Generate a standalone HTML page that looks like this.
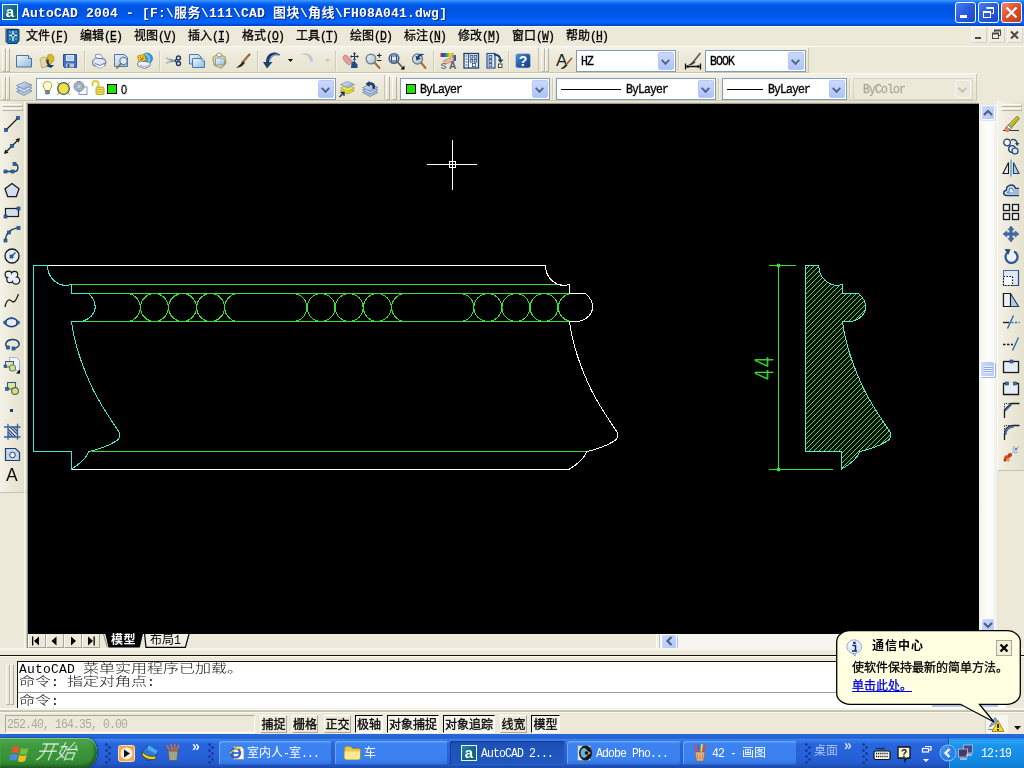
<!DOCTYPE html>
<html lang="zh-CN">
<head>
<meta charset="utf-8">
<title>AutoCAD 2004 - [F:\服务\111\CAD 图块\角线\FH08A041.dwg]</title>
<style>
*{box-sizing:border-box;margin:0;padding:0}
html,body{width:1024px;height:768px;overflow:hidden;background:#ece9d8}
body{position:relative;font-family:"Liberation Mono","Noto Sans CJK SC",monospace;font-size:12px;line-height:12px;color:#000}
.a{position:absolute}
.t{position:absolute;white-space:nowrap;font-size:12px;line-height:14px;height:14px}
.l{font-family:"Liberation Mono",monospace !important;font-size:11.5px !important;letter-spacing:-0.9px !important;display:inline-block;white-space:pre;transform:scaleY(1.16);transform-origin:0 76%}
svg{position:absolute;overflow:visible}
/* title bar */
#title{left:0;top:0;width:1024px;height:26px;background:linear-gradient(to bottom,#3f99ff 0px,#2c8afc 1px,#1672f6 2.5px,#0860ee 4px,#0055e6 6px,#0054e3 9px,#0056e8 14px,#005cf2 18px,#0366fb 21px,#0462f4 23px,#0150dc 24.5px,#003cba 26px)}
#ttext{left:22px;top:5px;height:18px;line-height:18px;color:#fff;font-weight:bold;font-family:"Liberation Mono","Noto Sans CJK SC",monospace;font-size:13px;letter-spacing:0.2px;text-shadow:1px 1px 0 #0a2a80}
#ttext b{font-size:13px;letter-spacing:0.5px;font-weight:bold}
.t,.tkt,.ddt,.sbtn,.cmd{will-change:transform}
.mi,.sbtn,.ddt,.bt{-webkit-text-stroke:0.3px currentColor}
.wb{position:absolute;top:2px;width:21px;height:21px;border:1px solid #fff;border-radius:3px;background:linear-gradient(135deg,#4a7ef0 0%,#2a5ce0 45%,#1c48c8 100%)}
.wb.x{background:linear-gradient(135deg,#f08a6a 0%,#e0522c 45%,#c23a14 100%)}
/* menu */
#menu{left:0;top:26px;width:1024px;height:21px;background:#ece9d8;border-top:1px solid #f8f7f2}
.mi{top:30px}
.cb{position:absolute;top:27px;width:16px;height:16px;border:1px solid #f7f6ef;border-right-color:#d8d4c2;border-bottom-color:#d8d4c2;background:#efede2}
</style>
</head>
<body>
<!-- ================= TITLE BAR ================= -->
<div id="title" class="a"></div>
<div class="a" style="left:2px;top:4px;width:16px;height:16px;border:1px solid #dffcff;background:linear-gradient(135deg,#2a8aa8,#14607e 60%,#1a6a58)"></div>
<div class="t" style="left:4px;top:4px;width:12px;height:16px;line-height:15px;text-align:center;color:#f4ffff;font:bold 15px/15px 'Liberation Sans',sans-serif">a</div>
<div id="ttext" class="t">AutoCAD 2004 - [F:\<b>服务</b>\111\CAD <b>图块</b>\<b>角线</b>\FH08A041.dwg]</div>
<div class="wb" style="left:955px"><div class="a" style="left:4px;top:12px;width:7px;height:3px;background:#fff"></div></div>
<div class="wb" style="left:978px"><svg style="left:0;top:0" width="19" height="19" viewBox="0 0 19 19"><path d="M7.5 4.5h7v6h-2" fill="none" stroke="#fff" stroke-width="1"/><path d="M7.5 5h7" stroke="#fff" stroke-width="2"/><rect x="4.5" y="8.5" width="7" height="6" fill="none" stroke="#fff"/><path d="M4.5 9h7" stroke="#fff" stroke-width="2"/></svg></div>
<div class="wb x" style="left:1001px"><svg style="left:0;top:0" width="19" height="19" viewBox="0 0 19 19"><path d="M4.500 4.500l10 10M14.500 4.500l-10 10" stroke="#fff" stroke-width="2.300" stroke-linecap="butt"/></svg></div>

<!-- ================= MENU BAR ================= -->
<div id="menu" class="a"></div>
<svg style="left:4px;top:28px" width="16" height="16" viewBox="0 0 16 16"><path d="M1 0.5h12l2 2v10l-2 3H3l-2-2z" fill="#8a8f98"/><path d="M3 1.5h12v11l-2 3H4l-1-1z" fill="#1a6aa8" stroke="#0e3c68" stroke-width="1"/><path d="M9 3v10M5 7.5h8" stroke="#e8fbff" stroke-width="1.3"/><circle cx="9" cy="7.5" r="1.6" fill="#0e3c68" stroke="#e8fbff" stroke-width="0.8"/><path d="M5 4h2M11 4h2M5 11h2M11 11h2" stroke="#6fc0e8" stroke-width="1.2"/></svg>
<div class="t mi" style="left:26px">文件<span class="l">(<u>F</u>)</span></div>
<div class="t mi" style="left:80px">编辑<span class="l">(<u>E</u>)</span></div>
<div class="t mi" style="left:134px">视图<span class="l">(<u>V</u>)</span></div>
<div class="t mi" style="left:188px">插入<span class="l">(<u>I</u>)</span></div>
<div class="t mi" style="left:242px">格式<span class="l">(<u>O</u>)</span></div>
<div class="t mi" style="left:296px">工具<span class="l">(<u>T</u>)</span></div>
<div class="t mi" style="left:350px">绘图<span class="l">(<u>D</u>)</span></div>
<div class="t mi" style="left:404px">标注<span class="l">(<u>N</u>)</span></div>
<div class="t mi" style="left:458px">修改<span class="l">(<u>M</u>)</span></div>
<div class="t mi" style="left:512px">窗口<span class="l">(<u>W</u>)</span></div>
<div class="t mi" style="left:566px">帮助<span class="l">(<u>H</u>)</span></div>
<div class="cb" style="left:971px"><div class="a" style="left:3px;top:9px;width:6px;height:2px;background:#4a4a48"></div></div>
<div class="cb" style="left:989px"><svg style="left:0;top:0" width="13" height="14" viewBox="0 0 13 14"><path d="M4.5 4V2.5h6v5H9" fill="none" stroke="#4a4a48"/><path d="M4 2.5h7" stroke="#4a4a48" stroke-width="2"/><rect x="2.5" y="5.5" width="6" height="5" fill="none" stroke="#4a4a48"/><path d="M2 5.5h7" stroke="#4a4a48" stroke-width="2"/></svg></div>
<div class="cb" style="left:1007px"><svg style="left:0;top:0" width="13" height="14" viewBox="0 0 13 14"><path d="M3 3.5l7 7M10 3.5l-7 7" stroke="#4a4a48" stroke-width="2"/></svg></div>
<style>
.tbbg{position:absolute;background:#ece9d8}
.grip{position:absolute;width:4px;border-left:1px solid #fbfaf4;border-top:1px solid #fbfaf4;border-right:1px solid #b5b2a2;border-bottom:1px solid #b5b2a2}
.hgrip{position:absolute;height:3px;border-left:1px solid #fbfaf4;border-top:1px solid #fbfaf4;border-right:1px solid #b5b2a2;border-bottom:1px solid #b5b2a2}
.sep{position:absolute;width:2px;top:51px;height:20px;border-left:1px solid #cfccbc;border-right:1px solid #f3f1e8}
.dd{position:absolute;height:22px;border:1px solid #7f9db9;background:#fff}
.dd .btn{position:absolute;right:1px;top:1px;width:16px;height:18px;border-radius:2px;border:1px solid #b7c8f5;background:linear-gradient(to bottom,#cbd8fb 0%,#bccefa 50%,#adc2f6 100%)}
.dd .btn:after{content:"";position:absolute;left:3px;top:4px;width:5px;height:5px;border-right:2px solid #4d6185;border-bottom:2px solid #4d6185;transform:rotate(45deg) scale(0.9)}
.dd.dis{border-color:#d8d5c4;background:#ece9d8}
.dd.dis .btn{background:#ebe9dd;border-color:#f6f5ee}
.dd.dis .btn:after{border-color:#c4c1b2}
.ddt{position:absolute;top:4px;line-height:14px;white-space:nowrap}
</style>
<!-- toolbar row backgrounds / edges -->
<div class="a" style="left:0;top:46px;width:1024px;height:1px;background:#fbfaf5"></div>
<div class="a" style="left:0;top:47px;width:539px;height:26px;background:linear-gradient(to bottom,#f3f1e7,#ece9d8 40%,#e6e3d0)"></div>
<div class="a" style="left:0;top:72px;width:809px;height:1px;background:#c9c6b4"></div>
<div class="a" style="left:538px;top:48px;width:1px;height:24px;background:#c9c6b4"></div>
<div class="a" style="left:539px;top:47px;width:270px;height:25px;background:linear-gradient(to bottom,#f3f1e7,#ece9d8 40%,#e6e3d0)"></div>
<div class="a" style="left:808px;top:48px;width:1px;height:25px;background:#c9c6b4"></div>
<div class="a" style="left:0;top:73px;width:977px;height:1px;background:#fbfaf5"></div>
<div class="a" style="left:0;top:74px;width:977px;height:27px;background:linear-gradient(to bottom,#f3f1e7,#ece9d8 40%,#e6e3d0)"></div>
<div class="a" style="left:976px;top:74px;width:1px;height:27px;background:#c9c6b4"></div>
<div class="a" style="left:384px;top:75px;width:1px;height:25px;background:#c9c6b4"></div>
<div class="a" style="left:0;top:100px;width:977px;height:1px;background:#c9c6b4"></div>
<!-- grips -->
<div class="grip" style="left:2px;top:48px;height:24px"></div><div class="grip" style="left:6px;top:48px;height:24px"></div>
<div class="grip" style="left:541px;top:48px;height:24px"></div><div class="grip" style="left:545px;top:48px;height:24px"></div>
<div class="grip" style="left:2px;top:76px;height:24px"></div><div class="grip" style="left:6px;top:76px;height:24px"></div>
<div class="grip" style="left:386px;top:76px;height:24px"></div><div class="grip" style="left:392px;top:76px;height:24px;width:5px"></div>
<!-- separators row1 -->
<div class="sep" style="left:84px"></div><div class="sep" style="left:159px"></div><div class="sep" style="left:257px"></div>
<div class="sep" style="left:335px"></div><div class="sep" style="left:433px"></div><div class="sep" style="left:508px"></div>
<div class="sep" style="left:678px"></div>
<div class="sep" style="left:552px;top:78px;height:21px"></div><div class="sep" style="left:718px;top:78px;height:21px"></div><div class="sep" style="left:849px;top:78px;height:21px"></div>
<!-- dropdowns row1 -->
<div class="dd" style="left:576px;top:50px;width:100px"><div class="ddt l" style="left:4px">HZ</div><div class="btn"></div></div>
<div class="dd" style="left:705px;top:50px;width:101px"><div class="ddt l" style="left:4px">BOOK</div><div class="btn"></div></div>
<!-- dropdowns row2 -->
<div class="dd" style="left:36px;top:78px;width:300px"><div class="ddt" style="left:84px;font:12px/14px 'Liberation Sans',sans-serif;transform:scaleX(0.900);transform-origin:0 50%">0</div><div class="btn"></div>
 <div class="a" style="left:70px;top:5px;width:10px;height:10px;background:#1fe600;border:1px solid #000"></div></div>
<div class="dd" style="left:400px;top:78px;width:150px"><div class="a" style="left:5px;top:5px;width:10px;height:10px;background:#1fe600;border:1px solid #000"></div><div class="ddt l" style="left:19px">ByLayer</div><div class="btn"></div></div>
<div class="dd" style="left:556px;top:78px;width:160px"><div class="a" style="left:4px;top:10px;width:60px;height:1px;background:#000"></div><div class="ddt l" style="left:69px">ByLayer</div><div class="btn"></div></div>
<div class="dd" style="left:722px;top:78px;width:125px"><div class="a" style="left:4px;top:10px;width:36px;height:1px;background:#000"></div><div class="ddt l" style="left:45px">ByLayer</div><div class="btn"></div></div>
<div class="dd dis" style="left:853px;top:78px;width:120px"><div class="ddt l" style="left:9px;color:#aca899">ByColor</div><div class="btn"></div></div>
<svg width="0" height="0" style="left:0;top:0"><defs>
<linearGradient id="gPage" x1="0" y1="0" x2="1" y2="1"><stop offset="0" stop-color="#eef6fc"/><stop offset="1" stop-color="#8fbbe0"/></linearGradient>
<linearGradient id="gLens" x1="0" y1="0" x2="1" y2="1"><stop offset="0" stop-color="#f2f6fa"/><stop offset="1" stop-color="#a8bcd0"/></linearGradient>
<linearGradient id="gHelp" x1="0" y1="0" x2="1" y2="1"><stop offset="0" stop-color="#5a94d8"/><stop offset="0.5" stop-color="#2a5ea8"/><stop offset="1" stop-color="#123a78"/></linearGradient>
<linearGradient id="gRain" x1="0" y1="0" x2="1" y2="0"><stop offset="0" stop-color="#e0203a"/><stop offset="0.25" stop-color="#2040e0"/><stop offset="0.5" stop-color="#20c040"/><stop offset="0.75" stop-color="#f0e020"/><stop offset="1" stop-color="#f08020"/></linearGradient>
<linearGradient id="gSheet" x1="0" y1="0" x2="1" y2="1"><stop offset="0" stop-color="#e6eef8"/><stop offset="1" stop-color="#7f9cc4"/></linearGradient>
</defs></svg>
<!-- row 1 icons -->
<svg style="left:16px;top:53px" width="16" height="16" viewBox="0 0 16 16"><path d="M0.5 2.5h12l3 3v8.500h-15z" fill="url(#gPage)" stroke="#45628e" stroke-width="0.900"/><path d="M12.500 2.500v3h3" fill="#f6fbff" stroke="#45628e" stroke-width="0.900"/></svg>
<svg style="left:39px;top:53px" width="16" height="16" viewBox="0 0 16 16"><path d="M1 6l3-2 4 1 1 8-6 2-1-4z" fill="#e6d7a6" stroke="#b9a36a" stroke-width="0.8"/><path d="M9 2c3-2 6 0 6 4 0 3-3 5-6 5-1 0-2-2-2-4z" fill="#d8b62a" stroke="#a88a20" stroke-width="0.6"/><path d="M8 6c-1 2-1 4 1 6l-2 1 5 2 3-3-3 0c-2-1-3-3-2-5z" fill="#1e3f66"/></svg>
<svg style="left:62px;top:53px" width="16" height="16" viewBox="0 0 16 16"><path d="M1.500 1.500h13v13h-12l-1-1z" fill="#4a70c2" stroke="#2d4e96"/><rect x="4" y="2" width="8" height="6" fill="#dbe9fb"/><path d="M5 4h6M5 6h6" stroke="#86a8dc" stroke-width="0.800"/><rect x="4" y="10.500" width="8" height="4" fill="#b4c2da"/><rect x="5.500" y="11.200" width="2" height="3" fill="#2d4e96"/></svg>
<svg style="left:91px;top:53px" width="16" height="16" viewBox="0 0 16 16"><path d="M4 2l5-1 3 4-6 2z" fill="#fbfcff" stroke="#6a7aa6" stroke-width="0.8"/><path d="M1.500 8l3-3 9 1 1.500 3-1 3.500-5 2.500-7-3z" fill="#dfe5f2" stroke="#4e5f94" stroke-width="0.9"/><path d="M4 10.500l5 2 5-2.500" fill="none" stroke="#4e5f94" stroke-width="0.8"/><path d="M5 12.500l4 1.800 4-2" stroke="#fff" stroke-width="1.300" fill="none"/></svg>
<svg style="left:113px;top:53px" width="17" height="16" viewBox="0 0 17 16"><path d="M1.500 1.500h10l3 3v9h-13z" fill="url(#gPage)" stroke="#4a78ae"/><circle cx="10.500" cy="8" r="3.600" fill="#e8f0f8" fill-opacity="0.85" stroke="#6a84a8" stroke-width="1.200"/><path d="M8 10.500l-4 4.500" stroke="#9a6a3a" stroke-width="1.800" stroke-linecap="round"/></svg>
<svg style="left:136px;top:52px" width="17" height="17" viewBox="0 0 17 17"><circle cx="11" cy="6.500" r="5.500" fill="#3f9ad8" stroke="#1f6aa8" stroke-width="0.6"/><path d="M9 2c3 1 5 4 4 8" fill="none" stroke="#bfe4f8" stroke-width="1.200"/><path d="M1.500 4l7-1.500 1.500 6-7 2z" fill="#f0c828" stroke="#b08a10" stroke-width="0.8"/><path d="M4 5.500h1M6.500 5h1M4.500 7.500l3-0.800" stroke="#7a5a08" stroke-width="1"/><path d="M1.500 11l3-2 8 1 2 2-1 2.500-5 2-6.500-2.500z" fill="#eef1f8" stroke="#5a6a9a" stroke-width="0.8"/><path d="M4 13l5 1.800 4-1.800" stroke="#8f9cc0" stroke-width="0.8" fill="none"/></svg>
<svg style="left:165px;top:53px" width="17" height="16" viewBox="0 0 17 16"><path d="M1 5l10 3.500M1.500 10l9.500-3" stroke="#8a8f9a" stroke-width="1.400" fill="none"/><path d="M1 5l5 1M1.500 10l5-1" stroke="#c9cdd6" stroke-width="1"/><circle cx="13.500" cy="5" r="2" fill="none" stroke="#1f3a66" stroke-width="1.400"/><circle cx="13.500" cy="10.500" r="2" fill="none" stroke="#1f3a66" stroke-width="1.400"/><path d="M10 7.500l2-1.500M10 8l2 1.500" stroke="#1f3a66" stroke-width="1.300"/></svg>
<svg style="left:189px;top:53px" width="16" height="16" viewBox="0 0 16 16"><path d="M0.500 1.500h9l2.500 2.500v7h-11.500z" fill="url(#gPage)" stroke="#4a78ae"/><path d="M3.500 5.500h9.500l2.500 2.500v6.500h-12z" fill="url(#gPage)" stroke="#4a78ae"/><path d="M13 5.500v2.500h2.500" fill="#f6fbff" stroke="#4a78ae" stroke-width="0.8"/></svg>
<svg style="left:211px;top:52px" width="17" height="17" viewBox="0 0 17 17"><path d="M2 5.500l5-3.500 7 3 1 6-5 5-7-3z" fill="#efe4b8" stroke="#b8a04a" stroke-width="1.300"/><path d="M5.500 2.500l2-1.500 3 1 .5 2-4 1z" fill="#f4f4f0" stroke="#7a7a70" stroke-width="0.700"/><path d="M4.500 6h7l2 2v5h-9z" fill="url(#gPage)" stroke="#6a8ab0" stroke-width="0.800"/></svg>
<svg style="left:235px;top:53px" width="16" height="16" viewBox="0 0 16 16"><path d="M14.500 1.500l-7.500 8.500" stroke="#8a6238" stroke-width="2.200" stroke-linecap="round"/><path d="M14 2.500l-6 7" stroke="#c89a60" stroke-width="0.700"/><path d="M8.500 8.500l1.500 1.500-3.500 3.500c-2 1-4 1-5.500 1 2-1 3-2 4-3z" fill="#2a2a2a"/></svg>
<svg style="left:263px;top:52px" width="18" height="18" viewBox="0 0 18 18"><path d="M17 3.500c-5-2.500-10.500 0-11 6.500h3.500l-5.500 6.500-4-6.500h3c0-8 7-12.500 14-7.500z" fill="#1f3f6e"/><path d="M16 3.300c-4-1.500-8.500 1-9.300 6" stroke="#4f74a6" stroke-width="0.900" fill="none"/></svg>
<svg style="left:288px;top:59px" width="5" height="3" viewBox="0 0 5 3"><path d="M0 0h5l-2.500 3z" fill="#000"/></svg>
<svg style="left:298px;top:52px" width="18" height="18" viewBox="0 0 18 18"><path d="M2 3c5-2 10 1 10.500 7l-3 0 4.500 6 4-6h-3c0-7-6-11.500-13-7z" fill="#c6c8cc"/><path d="M9.500 10l4.500 6 4-6" fill="#fbfbfb" fill-opacity="0.600"/></svg>
<svg style="left:325px;top:59px" width="5" height="3" viewBox="0 0 5 3"><path d="M0 0h5l-2.500 3z" fill="#c6c3b6"/></svg>
<svg style="left:342px;top:52px" width="17" height="18" viewBox="0 0 17 18"><path d="M1 4.500c1-1.500 2.500-1.500 4-1l5.500 5.500-3 4c-2.500-1-5-3-6.500-6.500z" fill="#e6a4a0" stroke="#b87878" stroke-width="0.700"/><path d="M2.500 5l5 5M4 4l5 5M1.500 7l4.500 4" stroke="#c88480" stroke-width="0.600"/><path d="M9.500 10.500l3-1.500 3 3.500v3.500h-6.500z" fill="#1f4e80"/><path d="M12.500 1v7M9 4.500h7" stroke="#1f3a5e" stroke-width="1.200"/><path d="M12.500 0l1.600 2h-3.200zM12.500 9l1.600-2h-3.200zM8 4.500l2-1.600v3.200zM17 4.500l-2-1.600v3.200z" fill="#1f3a5e"/></svg>
<svg style="left:365px;top:52px" width="17" height="18" viewBox="0 0 17 18"><circle cx="6" cy="7" r="4.800" fill="url(#gLens)" stroke="#70809a" stroke-width="1.400"/><path d="M9.500 10.500l5 5.500" stroke="#a0703a" stroke-width="2" stroke-linecap="round"/><path d="M12 3.500h4.500M14.250 1.200v4.600M12 8.500h4.500" stroke="#222" stroke-width="1.100"/></svg>
<svg style="left:388px;top:52px" width="17" height="18" viewBox="0 0 17 18"><circle cx="6" cy="6.500" r="4.800" fill="url(#gLens)" stroke="#3f5e8a" stroke-width="1.500"/><rect x="3.500" y="4" width="5" height="5" fill="#dfeaf6" stroke="#2a4a7a" stroke-width="1"/><path d="M9.500 10l4.500 5" stroke="#6a5a4a" stroke-width="1.800" stroke-linecap="round"/><path d="M16.500 13.500v4h-4z" fill="#000"/></svg>
<svg style="left:411px;top:52px" width="17" height="18" viewBox="0 0 17 18"><circle cx="6.500" cy="7" r="5" fill="url(#gLens)" stroke="#70809a" stroke-width="1.400"/><path d="M13.500 2.500c-3-1.500-6-.5-7 2l-2-.8 1 5 4.500-2.500-2-.8c1-1.500 3-2 5.500-2.900z" fill="#1f3f6e"/><path d="M10 10.500l4.500 5.500" stroke="#a0703a" stroke-width="2" stroke-linecap="round"/></svg>
<svg style="left:440px;top:52px" width="17" height="18" viewBox="0 0 17 18"><rect x="0.500" y="1" width="13" height="4" fill="url(#gRain)"/><path d="M3 9l9-4 3 1-1 2.500-8 3.500z" fill="#e8b8a0" stroke="#a87868" stroke-width="0.600"/><rect x="13.500" y="3" width="2.500" height="6" fill="#3a5a9a"/><text x="0.500" y="17" font-family="Liberation Sans,sans-serif" font-size="9" font-weight="bold" fill="#6a7a8a">S</text><text x="9" y="17.300" font-family="Liberation Sans,sans-serif" font-size="10" font-weight="bold" fill="#5a5a6a">A</text></svg>
<svg style="left:463px;top:52px" width="17" height="17" viewBox="0 0 17 17"><rect x="1" y="1.500" width="14.500" height="14.500" fill="#eaf1fa" stroke="#1f3f6e" stroke-width="1.300"/><path d="M5.500 2v14" stroke="#1f3f6e" stroke-width="0.800"/><path d="M2.500 4h2M2.500 7h2M2.500 10h2M2.500 13h2" stroke="#3f6ea8" stroke-width="1.200"/><rect x="7.200" y="3.500" width="2.600" height="2.600" fill="#c8daf0" stroke="#1f3f6e" stroke-width="0.700"/><rect x="11.200" y="3.500" width="2.600" height="2.600" fill="#c8daf0" stroke="#1f3f6e" stroke-width="0.700"/><rect x="7.200" y="7.500" width="2.600" height="2.600" fill="#c8daf0" stroke="#1f3f6e" stroke-width="0.700"/><rect x="11.200" y="7.500" width="2.600" height="2.600" fill="#c8daf0" stroke="#1f3f6e" stroke-width="0.700"/><rect x="9.500" y="11.500" width="3.200" height="3.200" fill="#fff" stroke="#1f3f6e" stroke-width="0.700"/></svg>
<svg style="left:486px;top:52px" width="17" height="17" viewBox="0 0 17 17"><rect x="1" y="1.500" width="8" height="14.500" fill="#dfeaf8" stroke="#2a4f8a" stroke-width="1.200"/><rect x="3" y="3.500" width="2.800" height="2.800" fill="#b8d0ee" stroke="#1f3f6e" stroke-width="0.700"/><rect x="3" y="7.500" width="2.800" height="2.800" fill="#b8d0ee" stroke="#1f3f6e" stroke-width="0.700"/><rect x="3" y="11.500" width="2.800" height="2.800" fill="#b8d0ee" stroke="#1f3f6e" stroke-width="0.700"/><path d="M8 2.500c4 0 6 2 6.500 5.500" fill="none" stroke="#1f3f6e" stroke-width="1.800"/><path d="M11.500 7.500h6l-3 3.500z" fill="#1f3f6e"/><rect x="12.500" y="12" width="3.500" height="3.500" fill="#fbfbf4" stroke="#333" stroke-width="0.900"/></svg>
<svg style="left:515px;top:53px" width="16" height="16" viewBox="0 0 16 16"><rect x="0.500" y="0.500" width="15" height="14.500" rx="2.500" fill="url(#gHelp)" stroke="#bcd2ec" stroke-width="0.600"/><text x="8" y="13" text-anchor="middle" font-family="Liberation Sans,sans-serif" font-size="14" font-weight="bold" fill="#fff">?</text></svg>
<!-- styles toolbar icons -->
<svg style="left:556px;top:52px" width="18" height="18" viewBox="0 0 18 18"><text x="0" y="14" font-family="Liberation Sans,sans-serif" font-size="17" fill="#1a1a1a">A</text><path d="M15.500 6.500l-6 7" stroke="#9a6a3a" stroke-width="1.800" stroke-linecap="round"/><path d="M10 12.500l1.200 1.200-3 2.800c-1.500.5-3 .5-4 .3 1.500-.8 2.500-1.500 3.500-2.500z" fill="#2a2a2a"/></svg>
<svg style="left:684px;top:52px" width="18" height="18" viewBox="0 0 18 18"><path d="M1.500 14.500h15M1.500 11.500v6M16.500 11.500v6" stroke="#111" stroke-width="1.300"/><path d="M1.500 14.500l3-1.800v3.600zM16.500 14.500l-3-1.800v3.600z" fill="#111"/><path d="M16 1.500l-7.500 9.500" stroke="#555" stroke-width="1.600" stroke-linecap="round"/><path d="M10 9l1.500 1.500-4 2.500c-1 .3-2 .3-3 0z" fill="#3a3a3a"/></svg>
<!-- row 2 icons -->
<svg style="left:16px;top:81px" width="17" height="16" viewBox="0 0 17 16"><path d="M0.500 10.500l8-3.500 7.500 3-8 4.500z" fill="#b8c8e0" stroke="#6a84b0" stroke-width="0.800"/><path d="M0.500 7.500l8-3.500 7.500 3-8 4.500z" fill="#d0dcee" stroke="#6a84b0" stroke-width="0.800"/><path d="M0.500 4.500l8-3.500 7.500 3-8 4.500z" fill="url(#gSheet)" stroke="#6a84b0" stroke-width="0.800"/></svg>
<svg style="left:42px;top:80px" width="11" height="17" viewBox="0 0 11 17"><path d="M5.500 1.500c-2.600 0-4.300 1.800-4.300 4 0 2 1.500 3 2 5h4.600c.5-2 2-3 2-5 0-2.200-1.700-4-4.300-4z" fill="#fdfbd8" stroke="#c8b040" stroke-width="1.100"/><rect x="3.500" y="10.500" width="4" height="3.500" rx="1" fill="#7a88a8" stroke="#4a587a" stroke-width="0.700"/></svg>
<svg style="left:56px;top:81px" width="15" height="15" viewBox="0 0 15 15"><path d="M1 1l13 13M14 1l-13 13" stroke="#c8c040" stroke-width="1.200"/><circle cx="7.500" cy="7.500" r="5.800" fill="#f0e040" stroke="#3a5a7a" stroke-width="1.300"/></svg>
<svg style="left:73px;top:80px" width="15" height="17" viewBox="0 0 15 17"><rect x="6" y="7" width="8" height="7.500" fill="#fdfdfd" stroke="#8a9ac0" stroke-width="1"/><circle cx="6" cy="6.500" r="5" fill="#a8b8c8" stroke="#7a8eb0" stroke-width="1"/><path d="M6 2v9M1.500 6.500h9M3 3.500l6 6M9 3.500l-6 6" stroke="#8a9ab8" stroke-width="0.900"/><circle cx="6" cy="6.500" r="1.800" fill="#c8d4c0"/></svg>
<svg style="left:91px;top:80px" width="14" height="17" viewBox="0 0 14 17"><path d="M1.500 6v-2.500c0-3.500 6-3.500 6 0v4" fill="none" stroke="#d8c838" stroke-width="1.800"/><rect x="5" y="7" width="8" height="7.500" rx="1" fill="#e8dc58" stroke="#b0a020" stroke-width="0.900"/><path d="M6 9.500h6M6 12h6" stroke="#c0b030" stroke-width="0.800"/></svg>
<svg style="left:339px;top:80px" width="17" height="18" viewBox="0 0 17 18"><path d="M1.500 10.500l7-3 7 3-7 3.500z" fill="#e8e040" stroke="#a8a020" stroke-width="0.800"/><path d="M1.500 8l7-3 7 3-7 3.500z" fill="#f0e850" stroke="#b0a828" stroke-width="0.800"/><path d="M1.500 4.500l7-3 7 3-7 3.500z" fill="url(#gSheet)" stroke="#7a90b8" stroke-width="0.800"/><path d="M0.500 17l4-4M1.500 12.500h3.500v3.500" stroke="#1a2a5a" stroke-width="1.300" fill="none"/></svg>
<svg style="left:362px;top:80px" width="17" height="18" viewBox="0 0 17 18"><path d="M0.500 12.500l8-3 7.500 3-8 4z" fill="#b0c0d8" stroke="#6a84b0" stroke-width="0.800"/><path d="M0.500 10l8-3 7.500 3-8 4z" fill="#c8d4e8" stroke="#6a84b0" stroke-width="0.800"/><path d="M0.500 7.500l8-3 7.500 3-8 4z" fill="url(#gSheet)" stroke="#6a84b0" stroke-width="0.800"/><path d="M12.500 9c2-4-1-7.500-5-6.500l.3-1.800-4.300 3.300 4 3 .3-2c2-.5 3.500 1.500 2.200 3.500z" fill="#1f3f6e"/></svg>
<!-- ================= DRAWING AREA ================= -->
<div class="a" style="left:28px;top:104px;width:951px;height:530px;background:#000"></div>
<svg style="left:28px;top:104px" width="951" height="530" viewBox="28 104 951 530" fill="none" stroke-width="1">
<defs>
<pattern id="hatch" x="0" y="0" width="5" height="5" patternUnits="userSpaceOnUse"><rect width="5" height="5" fill="#021002"/><g fill="#5fd058" shape-rendering="crispEdges"><rect x="0" y="4" width="1" height="1"/><rect x="1" y="3" width="1" height="1"/><rect x="2" y="2" width="1" height="1"/><rect x="3" y="1" width="1" height="1"/><rect x="4" y="0" width="1" height="1"/></g></pattern>
</defs>
<!-- front view: green -->
<g stroke="#3ade34" shape-rendering="crispEdges">
<path d="M71 284.500H562M88 293.500H569M82 321.500H569M92 451.500H589"/>
</g>
<g stroke="#3ade34" stroke-width="1" shape-rendering="crispEdges">
<path d="M128 293.600A14 14 0 0 1 128 321.400"/>
<circle cx="154.400" cy="307.500" r="13.900"/><circle cx="182.500" cy="307.500" r="13.900"/><circle cx="210.600" cy="307.500" r="13.900"/>
<path d="M237 293.600A14 14 0 0 0 237 321.400"/>
<path d="M294.500 293.600A14 14 0 0 1 294.500 321.400"/>
<circle cx="321.100" cy="307.500" r="13.900"/><circle cx="349.200" cy="307.500" r="13.900"/><circle cx="377.300" cy="307.500" r="13.900"/>
<path d="M404 293.600A14 14 0 0 0 404 321.400"/>
<path d="M461.500 293.600A14 14 0 0 1 461.500 321.400"/>
<circle cx="487.800" cy="307.500" r="13.900"/><circle cx="515.900" cy="307.500" r="13.900"/><circle cx="544" cy="307.500" r="13.900"/>
<path d="M569.500 293.800A14 14 0 0 0 569.500 321.200"/>
</g>
<!-- front view: cyan left end -->
<g stroke="#45e6d8" shape-rendering="crispEdges"><path d="M47.500 265.500H33.500V451.500H71.500V470M71.500 284V294M71 293.500H88.500M71 321.500H82"/></g>
<g stroke="#45e6d8" stroke-width="1" shape-rendering="crispEdges">
<path d="M47.500 265.500C47.500 277 56 285.500 67 285.500L71.500 284.500"/>
<path d="M88.500 293.500C92.500 297 95.200 302 95.200 307C95.200 313 90.500 319 82 321.500"/>
<path d="M71.500 321.500c2.500 20 10 44 22 69c8 16 20 33 25.500 41.500c2 3.500 .5 7 -3.500 9.500c-6 3.500 -17 8 -26.500 10q-3.500 9 -17.500 17.500"/>
</g>
<!-- front view: white -->
<g stroke="#fbfbfb" shape-rendering="crispEdges"><path d="M47.500 265.500H545.500M71.500 469.500H569.500M569.500 284V294M569.500 293.500H585.500M569.500 321.500H579"/></g>
<g stroke="#fbfbfb" stroke-width="1" shape-rendering="crispEdges">
<path d="M545.500 265.500C545.500 277 554 285.500 565 285.500L569.500 284.500"/>
<path d="M585.500 293.500C589.500 297 592.700 302 592.700 307C592.700 313 588 319 579 321.500"/>
<path d="M569.500 321.500c2.500 20 10 44 22 69c8 16 20 33 25.500 41.500c2 3.500 .5 7 -3.500 9.500c-6 3.500 -17 8 -26.500 10q-3.500 9 -17.500 17.500"/>
</g>
<!-- section view -->
<path d="M805.500 265.500H818.800C818.800 277 827.300 285.500 838.300 285.500L842.500 284.500V293.500H858.500C862.500 297 865.700 302 865.700 307C865.700 313 861 319 852 321.500H842.500c2.500 20 10 44 22 69c8 16 20 33 25.500 41.500c2 3.500 .5 7 -3.500 9.500c-6 3.500 -17 8 -26.500 10q-3.500 9 -18.500 17.500V451.500H805.500Z" fill="url(#hatch)" stroke="#55ead4" stroke-width="1" shape-rendering="crispEdges"/>
<!-- dimension -->
<g stroke="#3ade34" shape-rendering="crispEdges"><path d="M778.500 265V470M769 265.500H796M769 469.500H833"/></g>
<circle cx="778.500" cy="265.500" r="2" fill="#3ade34"/><circle cx="778.500" cy="469.500" r="2" fill="#3ade34"/>
<text transform="translate(773 380) rotate(-90) scale(0.720 1)" font-family="'DejaVu Sans','Liberation Sans',sans-serif" font-weight="200" font-size="24.500" fill="#3ade34" stroke="#3ade34" stroke-width="0.500" letter-spacing="2.100">44</text>
<!-- crosshair -->
<g stroke="#fff" shape-rendering="crispEdges"><path d="M427 164.500H477M452.500 140V190"/><rect x="449.500" y="161.500" width="6" height="6"/></g>
</svg>
<!-- ================= LEFT (DRAW) TOOLBAR ================= -->
<div class="a" style="left:0;top:101px;width:24px;height:391px;background:linear-gradient(to right,#f4f2e8,#ece9d8 45%,#e4e1cf)"></div>
<div class="a" style="left:0;top:492px;width:26px;height:1px;background:#c5c2b0"></div>
<div class="a" style="left:24px;top:101px;width:1px;height:549px;background:#f8f7f1"></div>
<div class="a" style="left:26px;top:102px;width:953px;height:1px;background:#d9d6c6"></div>
<div class="a" style="left:26px;top:103px;width:953px;height:1px;background:#9c9988"></div>
<div class="a" style="left:26px;top:103px;width:1px;height:545px;background:#d0cdbc"></div>
<div class="a" style="left:27px;top:103px;width:1px;height:545px;background:#8d8a7c"></div>
<div class="hgrip" style="left:2px;top:104px;width:21px"></div><div class="hgrip" style="left:2px;top:108px;width:21px"></div>
<svg style="left:3px;top:115px" width="18" height="18" viewBox="0 0 18 18"><path d="M3 15L15 3" stroke="#1a1a1a" stroke-width="1.300"/><rect x="1.500" y="13.500" width="3" height="3" fill="#2f67a8" stroke="#1a4478" stroke-width="0.700"/><rect x="13.500" y="1.500" width="3" height="3" fill="#2f67a8" stroke="#1a4478" stroke-width="0.700"/></svg>
<svg style="left:3px;top:137px" width="18" height="18" viewBox="0 0 18 18"><path d="M2.500 15.500L15.500 2.500" stroke="#1a1a1a" stroke-width="1.300"/><path d="M1 17l1.200-4.500 3.300 3.300zM17 1l-1.200 4.500-3.300-3.300z" fill="#1a1a1a"/><rect x="7.500" y="7.500" width="3" height="3" fill="#2f67a8" stroke="#1a4478" stroke-width="0.700"/></svg>
<svg style="left:3px;top:159px" width="18" height="18" viewBox="0 0 18 18"><path d="M2.500 12.500h9c4.500 0 4.500-7.500 0-7.500" fill="none" stroke="#1f3f6e" stroke-width="1.400"/><rect x="1" y="11" width="3" height="3" fill="#2f67a8" stroke="#1a4478" stroke-width="0.700"/><rect x="8" y="11" width="3" height="3" fill="#2f67a8" stroke="#1a4478" stroke-width="0.700"/><rect x="10" y="3.500" width="3" height="3" fill="#2f67a8" stroke="#1a4478" stroke-width="0.700"/></svg>
<svg style="left:3px;top:181px" width="18" height="18" viewBox="0 0 18 18"><path d="M9 2.500l7 5.200-2.700 8h-8.600l-2.700-8z" fill="#d4e0f0" stroke="#1a1a1a" stroke-width="1.300"/></svg>
<svg style="left:3px;top:203px" width="18" height="18" viewBox="0 0 18 18"><rect x="2.500" y="5.500" width="13" height="8" fill="#d4e0f0" stroke="#1a1a1a" stroke-width="1.200"/><rect x="1" y="12" width="3" height="3" fill="#2f67a8" stroke="#1a4478" stroke-width="0.700"/><rect x="14" y="4" width="3" height="3" fill="#2f67a8" stroke="#1a4478" stroke-width="0.700"/></svg>
<svg style="left:3px;top:225px" width="18" height="18" viewBox="0 0 18 18"><path d="M2.500 15.500c0-7 5-12 13-12.500" fill="none" stroke="#1f3f6e" stroke-width="1.400"/><rect x="1" y="14" width="3" height="3" fill="#2f67a8" stroke="#1a4478" stroke-width="0.700"/><rect x="4.500" y="6" width="3" height="3" fill="#2f67a8" stroke="#1a4478" stroke-width="0.700"/><rect x="14" y="1.500" width="3" height="3" fill="#2f67a8" stroke="#1a4478" stroke-width="0.700"/></svg>
<svg style="left:3px;top:247px" width="18" height="18" viewBox="0 0 18 18"><circle cx="9" cy="9" r="7" fill="#e6edf6" stroke="#1a1a1a" stroke-width="1.300"/><path d="M8.500 9.500l4-4" stroke="#1f4f90" stroke-width="1.200"/><rect x="7" y="8" width="3" height="3" fill="#2f67a8" stroke="#1a4478" stroke-width="0.700"/></svg>
<svg style="left:3px;top:269px" width="18" height="18" viewBox="0 0 18 18"><g fill="#1a1a1a"><circle cx="5.500" cy="5.500" r="4"/><circle cx="11.500" cy="5.500" r="3.800"/><circle cx="13" cy="11.500" r="4.300"/><circle cx="7" cy="10.500" r="3.800"/></g><g fill="#e9eef6"><circle cx="5.500" cy="5.500" r="2.800"/><circle cx="11.500" cy="5.500" r="2.600"/><circle cx="13" cy="11.500" r="3.100"/><circle cx="7" cy="10.500" r="2.600"/><circle cx="9.500" cy="8.300" r="3"/></g></svg>
<svg style="left:3px;top:291px" width="18" height="18" viewBox="0 0 18 18"><path d="M2 16C3 11 5 8 7 9S10 12 12 10S14.500 5 15.500 3" fill="none" stroke="#1a1a1a" stroke-width="1.300"/></svg>
<svg style="left:3px;top:313px" width="18" height="18" viewBox="0 0 18 18"><ellipse cx="8.500" cy="9.500" rx="6.300" ry="4.200" fill="#e6ecf6" stroke="#1f3f6e" stroke-width="1.500"/><rect x="0.800" y="8.200" width="2.600" height="2.600" fill="#2f67a8" stroke="#1a4478" stroke-width="0.600"/><rect x="13.600" y="8.200" width="2.600" height="2.600" fill="#2f67a8" stroke="#1a4478" stroke-width="0.600"/><rect x="7.200" y="4" width="2.600" height="2.200" fill="#2f67a8"/></svg>
<svg style="left:3px;top:335px" width="18" height="18" viewBox="0 0 18 18"><path d="M5 12.500c-5-3-1-8 4.500-8 6 0 8.500 4.500 5 7.500-1 1-3 1.500-4.500 1.500" fill="none" stroke="#1f3f6e" stroke-width="1.400"/><rect x="3.500" y="11" width="3" height="3" fill="#2f67a8" stroke="#1a4478" stroke-width="0.700"/><rect x="9" y="12" width="3" height="3" fill="#2f67a8" stroke="#1a4478" stroke-width="0.700"/></svg>
<svg style="left:3px;top:356px" width="18" height="19" viewBox="0 0 18 19"><path d="M6.500 1.500h7l3 3v10h-10z" fill="#eef3fa" stroke="#9aaac8" stroke-width="0.900"/><rect x="2.500" y="5.500" width="8" height="5.500" fill="#e0e69a" stroke="#3a5a8a" stroke-width="1"/><circle cx="9.500" cy="12" r="3.200" fill="#d6dc8c" stroke="#5a7a6a" stroke-width="1"/><rect x="1" y="9" width="2.600" height="2.600" fill="#2f67a8" stroke="#1a4478" stroke-width="0.600"/><path d="M17 13.500v4h-4z" fill="#000"/></svg>
<svg style="left:3px;top:379px" width="18" height="18" viewBox="0 0 18 18"><rect x="4.500" y="3.500" width="8" height="6.500" fill="#e2e890" stroke="#3a5a8a" stroke-width="1.100"/><circle cx="12" cy="12" r="3.400" fill="#d8de84" stroke="#4a6a5a" stroke-width="1.100"/><rect x="2.500" y="8.500" width="2.800" height="2.800" fill="#2f67a8" stroke="#1a4478" stroke-width="0.600"/></svg>
<div class="a" style="left:10px;top:409px;width:3px;height:3px;background:#1f3f6e"></div>
<svg style="left:3px;top:422px" width="18" height="19" viewBox="0 0 18 19"><rect x="5" y="5" width="9.500" height="10" fill="#f4f7fb"/><path d="M5 7l8 8M5 10l5 5M5 13l2 2M7 5l7.500 7.500M10 5l4.500 4.500M13 5l1.500 1.500" stroke="#27497c" stroke-width="1.200"/><path d="M5 1.700v16M14.500 1.700v16M1 5h16.500M1 15h16.500" stroke="#3a62a6" stroke-width="1.300"/></svg>
<svg style="left:3px;top:445px" width="18" height="18" viewBox="0 0 18 18"><path d="M2.500 3.500h10l4 4v8h-14z" fill="#c8d8ec" stroke="#1f3f6e" stroke-width="1.200"/><circle cx="9.500" cy="10" r="2.800" fill="#f4f7fb" stroke="#1f3f6e" stroke-width="1"/></svg>
<div class="t" style="left:6px;top:465px;height:20px;font:17.500px/20px 'Liberation Sans',sans-serif;color:#111">A</div>

<!-- ================= VERTICAL SCROLLBAR ================= -->
<div class="a" style="left:979px;top:104px;width:18px;height:530px;background:linear-gradient(to right,#eeede5 0,#f7f7f3 3px,#fefefd 9px,#fbfbf8 14px,#f0efe8 17px)"></div>
<div class="a sb" style="left:981px;top:105px;width:14px;height:15px;border:1px solid #fff;border-radius:2px;background:linear-gradient(135deg,#cbd9fc,#b2c6f8);box-shadow:0 0 0 0.500px #b9c9ef"></div>
<svg style="left:983px;top:109px" width="10" height="7" viewBox="0 0 10 7"><path d="M1 6l4-4 4 4" fill="none" stroke="#4d6185" stroke-width="2.200"/></svg>
<div class="a sb" style="left:981px;top:618px;width:14px;height:15px;border:1px solid #fff;border-radius:2px;background:linear-gradient(135deg,#cbd9fc,#b2c6f8)"></div>
<svg style="left:983px;top:622px" width="10" height="7" viewBox="0 0 10 7"><path d="M1 1l4 4 4-4" fill="none" stroke="#4d6185" stroke-width="2.200"/></svg>
<div class="a sb" style="left:980px;top:361px;width:15px;height:16px;border:1px solid #fff;border-radius:2px;background:linear-gradient(to right,#cbd9fc,#b6c9f9);box-shadow:1px 1px 0 #9fb3e0"></div>
<div class="a" style="left:984px;top:366px;width:8px;height:1px;background:#eef3fe;box-shadow:0 2px 0 #eef3fe,0 4px 0 #eef3fe,0 6px 0 #eef3fe,0 1px 0 #8fa8e0,0 3px 0 #8fa8e0,0 5px 0 #8fa8e0"></div>

<!-- ================= RIGHT (MODIFY) TOOLBAR ================= -->
<div class="a" style="left:998px;top:101px;width:26px;height:370px;background:linear-gradient(to right,#f4f2e8,#ece9d8 45%,#e4e1cf)"></div>
<div class="a" style="left:997px;top:101px;width:1px;height:370px;background:#fbfaf5"></div>
<div class="a" style="left:998px;top:470px;width:26px;height:1px;background:#c5c2b0"></div>
<div class="hgrip" style="left:1001px;top:104px;width:21px"></div><div class="hgrip" style="left:1001px;top:108px;width:21px"></div>
<svg style="left:1002px;top:115px" width="18" height="18" viewBox="0 0 18 18"><path d="M1 15.500h16" stroke="#333" stroke-width="1"/><path d="M15 1l2.500 2.500-8 9.500-3.500-3z" fill="#c4bc1e" stroke="#6a6ab0" stroke-width="0.600"/><path d="M16 2l1.300 1.300-8 9.500" fill="none" stroke="#8a8410" stroke-width="1"/><path d="M9.500 13l-3.500-3-1.500 1.800 3.500 3z" fill="#f6f7fb" stroke="#4a5ab0" stroke-width="0.800"/><path d="M8 14.800l-3.500-3c-2.300 1.500-2 4.500 .3 4.700 1.300 .1 2.500-.5 3.200-1.700z" fill="#e88c74" stroke="#a85a48" stroke-width="0.700"/></svg>
<svg style="left:1002px;top:137px" width="18" height="18" viewBox="0 0 18 18"><circle cx="5" cy="5.500" r="3.300" fill="#f4f7fb" stroke="#1f3f6e" stroke-width="1.300"/><circle cx="10" cy="12" r="3.300" fill="#dde5f0" stroke="#1f3f6e" stroke-width="1.300"/><circle cx="13" cy="14" r="3" fill="#dde5f0" stroke="#1f3f6e" stroke-width="1.200"/><path d="M9 3c3-1.500 5.500 0 6 3" fill="none" stroke="#1f3f6e" stroke-width="1.400"/><path d="M13 6h4.500l-2.300 3z" fill="#1f3f6e"/></svg>
<svg style="left:1002px;top:159px" width="18" height="18" viewBox="0 0 18 18"><path d="M9 0.500v17" stroke="#3f8fd0" stroke-width="1.200"/><path d="M6.500 3.500v11h-5.500z" fill="#e6edf6" stroke="#1a1a1a" stroke-width="1.100"/><path d="M11.500 3.500v11h5.500z" fill="#b8cce6" stroke="#1f3f6e" stroke-width="1.100"/></svg>
<svg style="left:1002px;top:181px" width="18" height="18" viewBox="0 0 18 18"><path d="M17 14.500H5C1 14.500 .5 10 4.500 9.200C4 4 11.500 1.500 13.500 7.500H17" fill="#e6edf7" stroke="#1f3f6e" stroke-width="1.500"/><path d="M17 12H6.500C4.500 12 4.500 10.800 7 10.800C6.500 6 10.500 5.500 11.500 10H17" fill="none" stroke="#5a8ac6" stroke-width="1.100"/></svg>
<svg style="left:1002px;top:203px" width="18" height="18" viewBox="0 0 18 18"><g fill="#eef2f8" stroke="#1a1a1a" stroke-width="1.300"><rect x="1.500" y="1.500" width="6" height="6"/><rect x="10.500" y="1.500" width="6" height="6"/><rect x="1.500" y="10.500" width="6" height="6"/><rect x="10.500" y="10.500" width="6" height="6"/></g></svg>
<svg style="left:1002px;top:225px" width="18" height="18" viewBox="0 0 18 18"><path d="M9 1l3 3.800h-1.800v3h3v-1.800l3.800 3-3.800 3v-1.800h-3v3h1.800l-3 3.800-3-3.800h1.800v-3h-3v1.800l-3.800-3 3.800-3v1.800h3v-3h-1.800z" fill="#3f68b0" stroke="#2a4a86" stroke-width="0.500"/></svg>
<svg style="left:1002px;top:247px" width="18" height="18" viewBox="0 0 18 18"><circle cx="9.500" cy="10" r="5.800" fill="#edf1f7" stroke="none"/><path d="M5.500 5.500a6 6 0 1 0 6.500-1" fill="none" stroke="#2f5a96" stroke-width="2.300"/><path d="M2.500 2l6 .3-2 5.500z" fill="#24497e"/></svg>
<svg style="left:1002px;top:269px" width="18" height="18" viewBox="0 0 18 18"><rect x="1.500" y="1.500" width="15" height="15" fill="#dfe8f6" stroke="#4a6a9a" stroke-width="1"/><path d="M16.500 1.500v15h-15" fill="none" stroke="#2a4a7e" stroke-width="1.200"/><rect x="1.500" y="7.500" width="9" height="9" fill="#f8fafd" stroke="#111" stroke-width="1.200" stroke-dasharray="1.500 1.500"/></svg>
<svg style="left:1002px;top:291px" width="18" height="18" viewBox="0 0 18 18"><path d="M1.500 2.500h7l8 13h-15z" fill="#b8cce6" stroke="#1f3f6e" stroke-width="1.200"/><path d="M1.500 2.500h7v13h-7z" fill="#eef2f8" stroke="#1a1a1a" stroke-width="1.200"/><path d="M8.500 4v10" stroke="#1a1a1a" stroke-dasharray="1.500 1.500"/></svg>
<svg style="left:1002px;top:313px" width="18" height="18" viewBox="0 0 18 18"><path d="M1 9.500h6.500" stroke="#1a1a1a" stroke-width="1.300"/><path d="M9.500 9.500h8" stroke="#2a6ab0" stroke-width="1.300" stroke-dasharray="2 1.500"/><path d="M11.500 2.500l-6 13" stroke="#2a6ab0" stroke-width="1.400"/></svg>
<svg style="left:1002px;top:335px" width="18" height="18" viewBox="0 0 18 18"><path d="M1 9.500h10" stroke="#1a1a1a" stroke-width="1.300" stroke-dasharray="2.500 1.500"/><path d="M16.500 2.500l-6 13" stroke="#2a6ab0" stroke-width="1.400"/></svg>
<svg style="left:1002px;top:357px" width="18" height="18" viewBox="0 0 18 18"><rect x="1.500" y="4.500" width="15" height="11" fill="#e6edf6" stroke="#1a1a1a" stroke-width="1.300"/><rect x="8" y="3" width="3" height="3" fill="#3f6eb0" stroke="#1f3f6e" stroke-width="0.600"/></svg>
<svg style="left:1002px;top:379px" width="18" height="18" viewBox="0 0 18 18"><path d="M6 4.500h-4.500v11h15v-11h-4.500" fill="#e6edf6" stroke="#1a1a1a" stroke-width="1.300"/><rect x="3.500" y="3" width="3" height="3" fill="#3f6eb0" stroke="#1f3f6e" stroke-width="0.600"/><rect x="11.500" y="3" width="3" height="3" fill="#3f6eb0" stroke="#1f3f6e" stroke-width="0.600"/></svg>
<svg style="left:1002px;top:401px" width="18" height="18" viewBox="0 0 18 18"><path d="M2.500 17v-8l6.500-6.500h8.500" fill="none" stroke="#1a1a1a" stroke-width="1.300"/><path d="M2.500 9v-6.500h6.500" fill="none" stroke="#1a1a1a" stroke-dasharray="1.300 1.300"/><path d="M3 10l7-7" stroke="#3f6eb0" stroke-width="1.600"/></svg>
<svg style="left:1002px;top:423px" width="18" height="18" viewBox="0 0 18 18"><path d="M2.500 17v-6c0-5 3.500-8.500 8.500-8.500h6.500" fill="none" stroke="#1a1a1a" stroke-width="1.300"/><path d="M2.500 9v-6.500h6.500" fill="none" stroke="#1a1a1a" stroke-dasharray="1.300 1.300"/><path d="M3.500 12c0-4.500 3-8 8.500-8.500" fill="none" stroke="#3f6eb0" stroke-width="1.800"/></svg>
<svg style="left:1002px;top:445px" width="18" height="18" viewBox="0 0 18 18"><path d="M3 15l5-5" stroke="#a03020" stroke-width="3" stroke-linecap="round"/><circle cx="4.500" cy="12.500" r="2.300" fill="#d84a2a"/><circle cx="8" cy="10" r="2" fill="#c83a20"/><circle cx="6" cy="15" r="1.800" fill="#e8a030"/><path d="M9 9l5-5M12 8l4-1M11 5l1-4M14.500 4.500l2-3" stroke="#8aa0d8" stroke-width="1"/><circle cx="14" cy="4" r="1.200" fill="#5a7ac8"/></svg>
<!-- ================= TAB ROW / H-SCROLL ================= -->
<style>
.nav{position:absolute;top:634px;width:18px;height:14px;border-right:1px solid #a8a595;border-bottom:1px solid #a8a595;border-left:1px solid #fff;background:#ece9d8}
.cmd{position:absolute;left:19px;white-space:nowrap;height:12px;line-height:12px;font-size:12px;font-weight:300;font-family:"Liberation Mono","Noto Sans CJK SC",monospace}
.cmd i{font-style:normal;font-weight:400;font-family:"Liberation Mono",monospace;font-size:13px;letter-spacing:0.200px;white-space:pre;display:inline-block;vertical-align:baseline}
.cmd b{font-weight:300;display:inline-block;vertical-align:baseline}
.cmd b span{display:inline-block;transform-origin:0 50%;transform:scaleX(1.3333);color:#111}
.sbtn{position:absolute;top:715px;height:18px;line-height:20px;overflow:hidden;text-align:center;white-space:nowrap;border:1px solid;border-color:#fff #aca899 #aca899 #fff;font-size:12px}
.sbtn.on{border-color:#000 #fff #fff #000;border-width:1px;background:#f4f3ec}
</style>
<div class="a" style="left:28px;top:634px;width:951px;height:15px;background:#ece9d8"></div>
<div class="nav" style="left:28px"></div><div class="nav" style="left:46px"></div><div class="nav" style="left:64px"></div><div class="nav" style="left:82px"></div>
<svg style="left:28px;top:634px" width="72" height="14" viewBox="0 0 72 14"><g fill="#000"><rect x="4" y="2.500" width="1.300" height="9"/><path d="M11 2.500v9l-5-4.500z"/><path d="M28.500 2.500v9l-5-4.500z"/><path d="M43 2.500v9l5-4.500z"/><path d="M60 2.500v9l5-4.500z"/><rect x="65.500" y="2.500" width="1.300" height="9"/></g></svg>
<svg style="left:100px;top:634px" width="92" height="16" viewBox="0 0 92 16"><path d="M3.500 0L7.300 13.300" stroke="#8a8778" stroke-width="1"/><path d="M5.400 0L8.500 13.500H39.750L42.900 0Z" fill="#000"/><path d="M44.600 0L46 13.300H85.400L89 0" fill="#f1efe3" stroke="#000" stroke-width="1.200"/></svg>
<div class="t" style="left:111px;top:634px;line-height:13px;height:13px;color:#fff;font-weight:bold;letter-spacing:0.500px;font-family:'Liberation Sans','Noto Sans CJK SC',sans-serif">模型</div>
<div class="t" style="left:150px;top:634px;line-height:13px;height:13px;font-family:'Liberation Sans','Noto Sans CJK SC',sans-serif">布局<span class="l">1</span></div>
<!-- h scrollbar -->
<div class="a" style="left:656px;top:634px;width:323px;height:15px;background:#f6f5ef"></div>
<div class="a" style="left:656px;top:634px;width:4px;height:14px;background:#f4f2e8;border-left:1px solid #fff;border-right:1px solid #c8c5b4"></div>
<div class="a" style="left:661px;top:634px;width:16px;height:15px;border:1px solid #fff;border-radius:2px;background:linear-gradient(135deg,#cbd9fc,#b2c6f8);box-shadow:1px 1px 0 #aebfe8"></div>
<svg style="left:665px;top:636px" width="8" height="10" viewBox="0 0 8 10"><path d="M6.500 1l-4 4 4 4" fill="none" stroke="#4d6185" stroke-width="2.200"/></svg>
<!-- lines between -->
<div class="a" style="left:0;top:648px;width:1024px;height:3px;background:linear-gradient(to bottom,#f8f7f0,#f1efe4)"></div>
<div class="a" style="left:0;top:655px;width:1024px;height:1px;background:#16160f"></div>
<div class="a" style="left:0;top:656px;width:1024px;height:1px;background:#fbfaf5"></div>
<!-- ================= COMMAND WINDOW ================= -->
<div class="a" style="left:17px;top:661px;width:989px;height:47px;background:#fff;border-top:1px solid #16160f;border-left:1px solid #16160f"></div>
<div class="a" style="left:932px;top:705px;width:66px;height:2px;background:#b4c4ea"></div>
<div class="a" style="left:18px;top:692px;width:988px;height:1px;background:#a0a0a0"></div>
<div class="grip" style="left:6px;top:664px;height:41px;width:4px"></div><div class="grip" style="left:10px;top:664px;height:41px;width:4px"></div>
<div class="cmd" style="top:664px"><i>AutoCAD </i><b style="width:160px"><span>菜单实用程序已加载。</span></b></div>
<div class="cmd" style="top:677px"><b style="width:32px"><span>命令</span></b><i>: </i><b style="width:80px"><span>指定对角点</span></b><i>:</i></div>
<div class="cmd" style="top:696px"><b style="width:32px"><span>命令</span></b><i>:</i></div>
<!-- ================= STATUS BAR ================= -->
<div class="a" style="left:0;top:708px;width:1024px;height:2px;background:#f6f5ee"></div>
<div class="a" style="left:0;top:710px;width:1024px;height:2px;background:linear-gradient(to bottom,#d0cdbc,#bebbaa)"></div>
<div class="a" style="left:0;top:712px;width:1024px;height:1px;background:#f8f7f1"></div>
<div class="a" style="left:5px;top:715px;width:250px;height:18px;border:1px solid;border-color:#aca899 #fff #fff #aca899"></div>
<div class="t l" style="left:7px;top:718px;color:#aca899">252.40, 164.35, 0.00</div>
<div class="sbtn" style="left:260px;width:27px">捕捉</div>
<div class="sbtn" style="left:292px;width:26px">栅格</div>
<div class="sbtn" style="left:324px;width:27px">正交</div>
<div class="sbtn on" style="left:355px;width:28px">极轴</div>
<div class="sbtn on" style="left:387px;width:52px">对象捕捉</div>
<div class="sbtn on" style="left:443px;width:52px">对象追踪</div>
<div class="sbtn" style="left:500px;width:27px">线宽</div>
<div class="sbtn on" style="left:531px;width:29px">模型</div>
<!-- tray icon in status bar -->
<div class="a" style="left:985px;top:715px;width:23px;height:18px;background:#f6f5ee;border-left:1px solid #d0cdbc"></div>
<svg style="left:987px;top:714px" width="20" height="20" viewBox="0 0 20 20"><path d="M2.500 13l5.500-9.500 3 4z" fill="#9aa8c8" stroke="#5a6a90" stroke-width="0.800"/><path d="M1 15.500h6" stroke="#8a96b0" stroke-width="1.200"/><path d="M11 6.500l6 11h-12z" fill="#f4dc20" stroke="#8a7a10" stroke-width="0.800"/><rect x="10.200" y="10" width="1.700" height="4" fill="#111"/><rect x="10.200" y="15" width="1.700" height="1.600" fill="#111"/></svg>
<svg style="left:1014px;top:726px" width="7" height="4" viewBox="0 0 7 4"><path d="M0 0h7l-3.500 4z" fill="#111"/></svg>
<!-- ================= TASKBAR ================= -->
<style>
.tk{position:absolute;top:741px;height:24px;border-radius:3px;background:linear-gradient(to bottom,#5a9cf8 0,#3c82f0 3px,#3a80ee 18px,#3072e0 24px);box-shadow:inset 1px 1px 0 #6aa8fa,inset -1px -1px 0 #2a62c8}
.tk.act{background:linear-gradient(to bottom,#1a48a8 0,#1e52b8 4px,#2058c0 24px);box-shadow:inset 1px 1px 0 #153a90,inset -1px -1px 0 #2a62c8}
.tkt{position:absolute;top:747px;color:#fff;white-space:nowrap;line-height:14px;height:14px;font-size:12px}
.dots{position:absolute;top:743px;width:3px;height:22px;background-image:radial-gradient(circle at 1.500px 1.500px,#173c9c 1.100px,rgba(23,60,156,0) 1.600px);background-size:3px 6px;background-repeat:repeat-y}
.dots.b{top:746px;height:17px}
</style>
<div class="a" style="left:0;top:734px;width:1024px;height:34px;background:linear-gradient(to bottom,#2a66d8 0,#2a66d8 3px,#1f55c4 4px,#3c82ee 5px,#3278ea 7px,#2866de 10px,#2660d8 24px,#2258c8 30px,#1a48a8 34px)"></div>
<!-- start button -->
<div class="a" style="left:0;top:738px;width:97px;height:30px;border-radius:0 10px 12px 0/0 14px 16px 0;background:linear-gradient(to bottom,#2f7a34 0,#4aa24c 2px,#44a046 5px,#3c983c 10px,#389238 20px,#2f8230 27px,#266e28 30px);box-shadow:inset 0 1px 1px #8ad08a,inset -2px -2px 3px #1f5a20,1px 0 2px #143a80"></div>
<svg style="left:11px;top:744px" width="20" height="19" viewBox="0 0 20 19"><path d="M1.500 3.500c2-1.500 4.500-1.500 7-.300l-1.500 6c-2.500-1.200-5-1.200-7 .300z" fill="#e8562a"/><path d="M10 3.800c2.500 1.200 5 1.200 7.500-.300l-1.500 6c-2.500 1.500-5 1.500-7.500.300z" fill="#7ac040"/><path d="M-.3 10.800c2-1.500 4.500-1.500 7-.300l-1.500 6c-2.500-1.200-5-1.200-7 .300z" fill="#4a8ae8"/><path d="M8.200 11.100c2.500 1.200 5 1.200 7.500-.300l-1.500 6c-2.500 1.500-5 1.500-7.500.300z" fill="#f0c020"/></svg>
<div class="t" style="left:36px;top:741px;height:22px;line-height:22px;font-size:20px;color:#fff;font-style:italic;font-family:'Liberation Sans','Noto Sans CJK SC',sans-serif;font-weight:300;transform:skewX(-8deg)">开始</div>
<!-- quick launch -->
<div class="dots" style="left:105px"></div><div class="dots b" style="left:108px"></div>
<svg style="left:118px;top:745px" width="17" height="17" viewBox="0 0 17 17"><rect x="0.500" y="0.500" width="16" height="16" rx="2" fill="#f0a848" stroke="#f8e0b0" stroke-width="1"/><circle cx="8.500" cy="8.500" r="6" fill="#f4f0e8"/><path d="M6 4.500l6 4-6 4z" fill="#111"/></svg>
<svg style="left:141px;top:744px" width="18" height="18" viewBox="0 0 18 18"><path d="M1 7l7-6 9 6-3 7-7 3-6-6z" fill="#2a78d8" stroke="#123a80" stroke-width="0.800"/><path d="M8 1l9 6-2 3-9-5z" fill="#4aa8f0"/><path d="M1.500 8c4 4 8 5 14 4l-1 3c-5 1.500-10 0-13.500-4z" fill="#f0d020" stroke="#3a3a10" stroke-width="0.800"/></svg>
<svg style="left:165px;top:744px" width="16" height="18" viewBox="0 0 16 18"><path d="M2 1l3 7M6 0l1.500 8M10 0l-1 8M14 1l-3.500 7" stroke="#c86a4a" stroke-width="1.800"/><path d="M3 7h10l-1.500 9.500h-7z" fill="#b8a070" stroke="#6a5a3a" stroke-width="0.800"/><path d="M5 8v8M8 8v8M11 8v8" stroke="#6aa8d8" stroke-width="0.900"/></svg>
<div class="tkt" style="left:192px;top:739px;font-size:14px;font-weight:bold;font-family:'Liberation Sans',sans-serif;color:#e8effd">»</div>
<div class="dots" style="left:208px"></div><div class="dots b" style="left:211px"></div>
<!-- task buttons -->
<div class="tk" style="left:219px;width:113px"></div>
<svg style="left:229px;top:745px" width="16" height="16" viewBox="0 0 16 16"><path d="M4.500 1.500h8l2.500 2.500v10.500h-10.500z" fill="#f4f4f0" stroke="#8a8a80" stroke-width="0.800"/><circle cx="6.500" cy="8" r="4.500" fill="none" stroke="#2a5ad0" stroke-width="2.200"/><path d="M1 8.500c3-4 8-6 11-5" stroke="#e8c030" stroke-width="1.300" fill="none"/><path d="M3 8h7" stroke="#2a5ad0" stroke-width="1.600"/></svg>
<div class="tkt" style="left:247px">室内人<span class="l">-</span>室<span class="l">...</span></div>
<div class="tk" style="left:335px;width:113px"></div>
<svg style="left:344px;top:746px" width="17" height="14" viewBox="0 0 17 14"><path d="M0.500 2.500q0-2 2-2h4l2 2h6q2 0 2 2v7q0 2-2 2h-12q-2 0-2-2z" fill="#e8c850" stroke="#a88a20" stroke-width="0.800"/><path d="M0.500 5.500h15.500v6q0 2-2 2h-11.500q-2 0-2-2z" fill="#f8e890"/></svg>
<div class="tkt" style="left:364px">车</div>
<div class="tk act" style="left:450px;width:115px"></div>
<div class="a" style="left:461px;top:745px;width:16px;height:16px;border:1px solid #dffcff;background:linear-gradient(135deg,#2a8aa8,#14607e 60%,#1a6a58)"></div>
<div class="t" style="left:463px;top:745px;width:12px;height:16px;text-align:center;color:#f4ffff;font:bold 15px/15px 'Liberation Sans',sans-serif">a</div>
<div class="tkt l" style="left:481px">AutoCAD 2...</div>
<div class="tk" style="left:567px;width:114px"></div>
<svg style="left:577px;top:745px" width="16" height="16" viewBox="0 0 16 16"><rect x="0.500" y="0.500" width="13" height="15" fill="#d8e4f4" stroke="#6a8ab8" stroke-width="0.800"/><ellipse cx="8.500" cy="8" rx="6.500" ry="7.500" fill="#101820"/><ellipse cx="7" cy="8" rx="3.500" ry="5" fill="#6ab0d8"/><path d="M9 5l5 3-5 3z" fill="#f0a060"/><circle cx="9.500" cy="8" r="1.800" fill="#111"/></svg>
<div class="tkt l" style="left:596px">Adobe Pho...</div>
<div class="tk" style="left:683px;width:114px"></div>
<svg style="left:693px;top:744px" width="14" height="18" viewBox="0 0 14 18"><path d="M1.500 1l2.500 8M5 0l1 9M9 0l-1 9M12.500 1l-3 8" stroke="#d84a3a" stroke-width="1.800"/><path d="M5 0l1 9" stroke="#3a6ad8" stroke-width="1.800"/><path d="M9 0l-1 9" stroke="#f0d030" stroke-width="1.800"/><path d="M2 8h10l-1.500 9h-7z" fill="#d8c8a0" stroke="#8a6a3a" stroke-width="0.800"/><path d="M4 9.500l1 6M7 9.500v6M10 9.500l-1 6" stroke="#e86a4a" stroke-width="1.100"/></svg>
<div class="tkt" style="left:712px"><span class="l">42 - </span>画图</div>
<!-- desktop toolbar -->
<div class="dots" style="left:805px"></div><div class="dots b" style="left:808px"></div>
<div class="tkt" style="left:814px;top:745px;color:#a9c1f0">桌面</div>
<div class="tkt" style="left:844px;top:738px;font-size:14px;font-weight:bold;font-family:'Liberation Sans',sans-serif;color:#d0dcf8">»</div>
<div class="dots" style="left:862px"></div><div class="dots b" style="left:865px"></div>
<svg style="left:873px;top:747px" width="18" height="14" viewBox="0 0 18 14"><path d="M3 1.500c1-1 2 1 3 0s2 1 3 0 2 1 3 0" fill="none" stroke="#111" stroke-width="1"/><rect x="1" y="4" width="16" height="8.500" rx="1.500" fill="#fbfbf0" stroke="#111" stroke-width="1.200"/><path d="M3 6.500h12M3 9.500h12" stroke="#111" stroke-width="1.500" stroke-dasharray="1.200 0.900"/></svg>
<svg style="left:897px;top:746px" width="15" height="17" viewBox="0 0 15 17"><path d="M1 1h12v11h-3l-2 3v-3h-7z" fill="#fbf8d8" stroke="#111" stroke-width="1.300"/><text x="7" y="10.500" text-anchor="middle" font-family="Liberation Sans,sans-serif" font-weight="bold" font-size="10" fill="#111">?</text></svg>
<svg style="left:921px;top:745px" width="12" height="18" viewBox="0 0 12 18"><path d="M4 1.500h6v3.500h-2" fill="none" stroke="#fff" stroke-width="1.200"/><rect x="1.500" y="3.500" width="6" height="3.500" fill="none" stroke="#fff" stroke-width="1.200"/><path d="M2 14h6l-3 3z" fill="#fff"/></svg>
<!-- tray -->
<div class="a" style="left:948px;top:738px;width:76px;height:30px;background:linear-gradient(to bottom,#1a8ae8 0,#2aa0f4 3px,#1a92ec 8px,#128ae4 22px,#0e7ad0 30px);border-left:1px solid #0e4ea8;box-shadow:inset 1px 0 0 #3ab0f8"></div>
<svg style="left:939px;top:744px" width="18" height="18" viewBox="0 0 18 18"><circle cx="9" cy="9" r="8" fill="#2a7ee8" stroke="#8ac4fa" stroke-width="1"/><circle cx="7.500" cy="7" r="5" fill="#4a9af4" fill-opacity="0.600"/><path d="M10.500 5l-4 4 4 4" fill="none" stroke="#fff" stroke-width="2.200"/></svg>
<svg style="left:957px;top:744px" width="17" height="18" viewBox="0 0 17 18"><rect x="6.500" y="1" width="9" height="8" fill="#3a4a8a" stroke="#b0b8d0" stroke-width="0.900"/><rect x="1.500" y="5" width="9" height="8" fill="#4a3a6a" stroke="#b0b8d0" stroke-width="0.900"/><path d="M3 15h7M9 11h6" stroke="#c8ccd8" stroke-width="1.600"/><path d="M5 13v2M12 9v2" stroke="#a0a8c0" stroke-width="1.500"/></svg>
<div class="tkt l" style="left:981px;top:747px">12:19</div>
<!-- ================= BALLOON ================= -->
<svg style="left:830px;top:626px" width="194" height="100" viewBox="830 626 194 100"><path d="M850 630.700H1007A13.300 11 0 0 1 1020.300 641.700V693.300A13.300 11 0 0 1 1007 704.300H979.500L994 722 960.500 704.300H850A13.300 11 0 0 1 836.700 693.300V641.700A13.300 11 0 0 1 850 630.700Z" fill="#ffffe1" stroke="#000" stroke-width="1.300"/>
<path d="M852 652.800l3 3.400 1.200-3.400z" fill="#d4e2f4" stroke="#7a96c0" stroke-width="0.800"/><ellipse cx="854.200" cy="646.700" rx="7.400" ry="6.900" fill="#dfeaf8" stroke="#8ea8cc" stroke-width="0.900"/><ellipse cx="852.500" cy="644.500" rx="4" ry="3" fill="#fff" fill-opacity="0.750"/>
<rect x="853.200" y="641.800" width="2.400" height="2.200" fill="#16246e"/><path d="M852.300 645.600h3.200v5.200M852 651h5" stroke="#16246e" stroke-width="1.500" fill="none"/>
<rect x="996.500" y="640.500" width="15" height="15" fill="#f3f2d8" stroke="#a8a894" stroke-width="1"/><path d="M1000.500 644.500l7 7M1007.500 644.500l-7 7" stroke="#000" stroke-width="2.300"/></svg>
<div class="t" style="left:872px;top:639px;font-weight:bold;letter-spacing:1px;font-family:'Liberation Sans','Noto Sans CJK SC',sans-serif">通信中心</div>
<div class="t bt" style="left:852px;top:661px;font-family:'Liberation Sans','Noto Sans CJK SC',sans-serif">使软件保持最新的简单方法。</div>
<div class="t bt" style="left:852px;top:679px;color:#0000e0;text-decoration:underline;font-family:'Liberation Sans','Noto Sans CJK SC',sans-serif">单击此处。</div>
</body>
</html>
